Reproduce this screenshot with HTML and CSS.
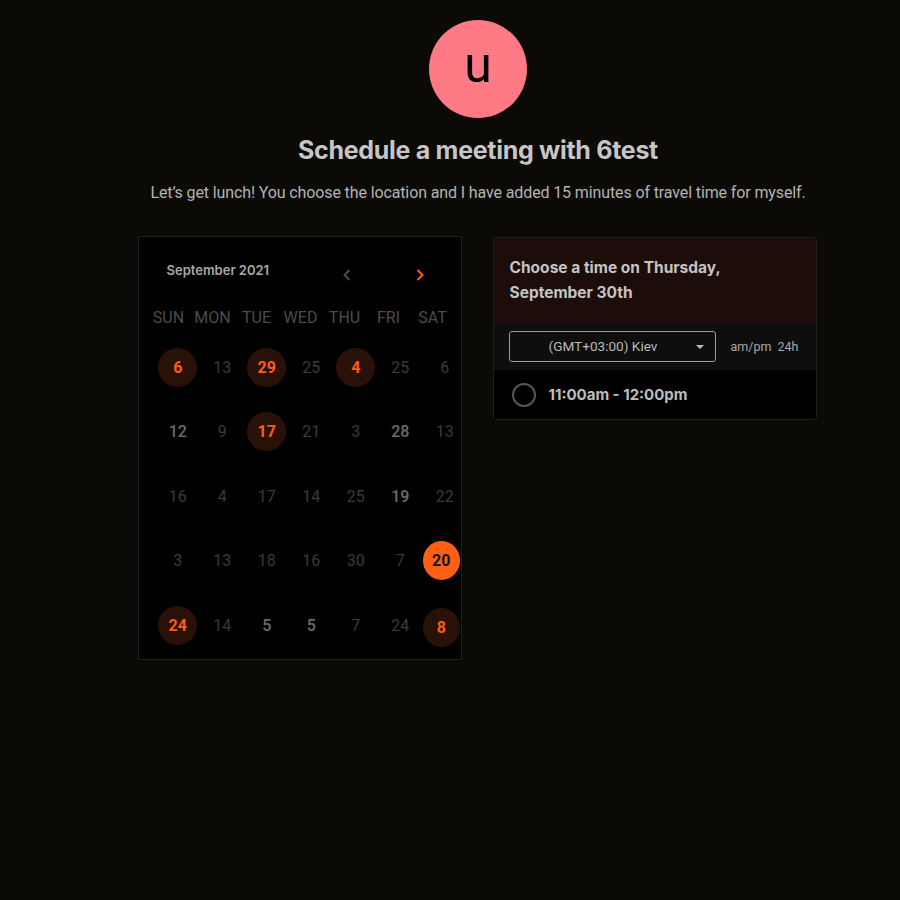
FILE: index.html
```html
<!DOCTYPE html>
<html>
<head>
<meta charset="utf-8">
<link rel="stylesheet" href="styles.css">
</head>
<body>
<div class="page">
  <div class="avatar">u</div>
  <h1 class="title">Schedule a meeting with 6test</h1>
  <p class="subtitle">Let’s get lunch! You choose the location and I have added 15 minutes of travel time for myself.</p>
  <div class="cards">
    <div class="calendar">
      <div class="cal-head">
        <span class="month">September 2021</span>
        <span class="nav prev"><svg width="12" height="14" viewBox="0 0 12 14"><path d="M8.5 2 L3.5 7 L8.5 12" fill="none" stroke="#4a4a4a" stroke-width="2"/></svg></span>
        <span class="nav next"><svg width="12" height="14" viewBox="0 0 12 14"><path d="M3.5 2 L8.5 7 L3.5 12" fill="none" stroke="#ff5b14" stroke-width="2"/></svg></span>
      </div>
      <div class="dows">
        <span>SUN</span><span>MON</span><span>TUE</span><span>WED</span><span>THU</span><span>FRI</span><span>SAT</span>
      </div>
      <div class="days">
        <span class="d av"><b>6</b></span><span class="d">13</span><span class="d av"><b>29</b></span><span class="d">25</span><span class="d av"><b>4</b></span><span class="d">25</span><span class="d">6</span>
        <span class="d on">12</span><span class="d">9</span><span class="d av"><b>17</b></span><span class="d">21</span><span class="d">3</span><span class="d on">28</span><span class="d">13</span>
        <span class="d">16</span><span class="d">4</span><span class="d">17</span><span class="d">14</span><span class="d">25</span><span class="d on">19</span><span class="d">22</span>
        <span class="d">3</span><span class="d">13</span><span class="d">18</span><span class="d">16</span><span class="d">30</span><span class="d">7</span><span class="d sel edge"><b>20</b></span>
        <span class="d av"><b>24</b></span><span class="d">14</span><span class="d on">5</span><span class="d on">5</span><span class="d">7</span><span class="d">24</span><span class="d av low edge"><b>8</b></span>
      </div>
    </div>
    <div class="panel">
      <div class="panel-head">Choose a time on Thursday,<br>September 30th</div>
      <div class="toolbar">
        <div class="select">
          <span>(GMT+03:00) Kiev</span>
          <svg class="caret" width="8" height="4" viewBox="0 0 8 4"><path d="M0 0 L8 0 L4 4 Z" fill="#bbb"/></svg>
        </div>
        <div class="fmt"><span>am/pm</span><span>24h</span></div>
      </div>
      <div class="slot">
        <span class="radio"></span>
        <span class="slot-text">11:00am - 12:00pm</span>
      </div>
    </div>
  </div>
</div>
</body>
</html>
```
FILE: styles.css
```css
html, body {
  margin: 0;
  padding: 0;
  background: #0c0a07;
}
body {
  font-family: Roboto, "Liberation Sans", sans-serif;
  height: 900px;
}
.page {
  padding-left: 56px;
  padding-top: 20px;
  display: flex;
  flex-direction: column;
  align-items: center;
}
.avatar {
  width: 98px;
  height: 98px;
  border-radius: 50%;
  background: #ff7a84;
  color: #000;
  font-family: Roboto, sans-serif;
  font-size: 50px;
  line-height: 90px;
  text-align: center;
}
.title {
  margin: 18px 0 0;
  font-family: Inter, sans-serif;
  font-weight: 700;
  font-size: 25px;
  line-height: 28px;
  letter-spacing: -0.3px;
  color: #c6c6c6;
}
.subtitle {
  margin: 19px 0 0;
  font-size: 16px;
  line-height: 20px;
  letter-spacing: -0.12px;
  color: #b3b3b3;
}
.cards {
  margin-top: 33px;
  margin-right: 2px;
  display: flex;
  gap: 31px;
  align-items: flex-start;
}
.calendar {
  width: 322px;
  height: 422px;
  background: #000;
  border: 1px solid #222;
  border-radius: 3px;
  position: relative;
}
.cal-head {
  display: flex;
  align-items: center;
  height: 24px;
  margin-top: 21px;
  padding-left: 28px;
}
.month {
  font-family: Inter, sans-serif;
  font-weight: 600;
  font-size: 13px;
  color: #a8a8a8;
  width: 174px;
}
.nav {
  display: flex;
  width: 14px;
  margin-top: 9px;
}
.next { margin-left: 59px; }
.dows {
  display: grid;
  grid-template-columns: repeat(7, 44px);
  padding-left: 8px;
  margin-top: 25px;
  height: 20px;
  align-items: center;
  font-size: 16px;
  color: #4c4c4c;
}
.dows span { text-align: center; }
.days {
  display: grid;
  grid-template-columns: repeat(7, 44.5px);
  grid-auto-rows: 64.5px;
  padding-left: 17px;
  margin-top: 8px;
  width: 312px;
}
.d {
  display: flex;
  align-items: center;
  justify-content: center;
  font-size: 16px;
  color: #3a3a3a;
}
.d.on {
  color: #6c6c6c;
  font-weight: 500;
}
.d b {
  width: 39px;
  height: 39px;
  border-radius: 50%;
  display: flex;
  align-items: center;
  justify-content: center;
  font-weight: 700;
}
.d.av b {
  background: #2a1108;
  color: #ff5b14;
}
.d.sel b {
  background: #ff5f15;
  color: #111;
}
.d.edge b { margin-right: 7px; }
.d.low b { margin-top: 4px; }
.panel {
  width: 322px;
  border: 1px solid #1e1e1e;
  border-radius: 3px;
  background: #000;
  overflow: hidden;
  margin-top: 1px;
}
.panel-head {
  background: #1c0d08;
  height: 84px;
  box-sizing: border-box;
  padding: 17px 16px 0;
  font-family: Inter, sans-serif;
  font-weight: 700;
  font-size: 15.5px;
  line-height: 25px;
  color: #c4c4c4;
}
.toolbar {
  background: #0e0e0e;
  height: 48px;
  display: flex;
  align-items: center;
  padding-left: 15px;
}
.select {
  width: 205px;
  height: 29px;
  border: 1px solid #9a9a9a;
  border-radius: 3px;
  position: relative;
  display: flex;
  align-items: center;
  font-size: 13.6px;
  color: #b8b8b8;
}
.select span { margin-left: 39px; }
.caret {
  position: absolute;
  right: 11px;
  top: 13px;
}
.fmt {
  margin-left: 15px;
  display: flex;
  gap: 6px;
  font-size: 12.5px;
  color: #a8a8a8;
}
.slot {
  height: 49px;
  display: flex;
  align-items: center;
  padding-left: 18px;
  background: #000;
}
.radio {
  width: 20px;
  height: 20px;
  border: 2px solid #555;
  border-radius: 50%;
}
.slot-text {
  margin-left: 13px;
  font-family: Inter, sans-serif;
  font-weight: 700;
  font-size: 15px;
  color: #bdbdbd;
}
```
